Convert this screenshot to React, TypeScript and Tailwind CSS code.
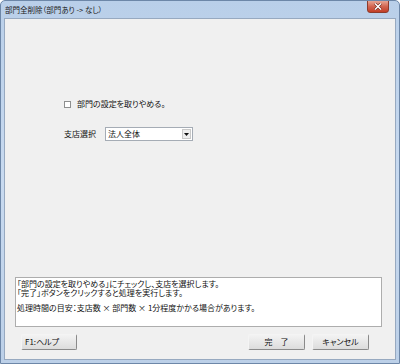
const font = "font-['Noto_Sans_CJK_JP','Noto_Sans',sans-serif] [font-feature-settings:'palt']";

function Button({ label, className }: { label: string; className?: string }) {
  return (
    <button
      className={`h-[16px] rounded-[2px] border border-t-[#f4f4f4] border-l-[#f4f4f4] border-r-[#8a8a8a] border-b-[#8a8a8a] bg-gradient-to-b from-[#f3f3f3] to-[#dcdcdc] text-[8px] leading-[14px] text-[#111] ${className ?? ''}`}
    >
      {label}
    </button>
  );
}

export default function App() {
  return (
    <div
      className={`${font} relative flex h-[364px] w-[400px] flex-col overflow-hidden rounded-t-[5px] border border-[#6d87a8] bg-gradient-to-b from-[#b9cfe9] via-[#c8daf0] to-[#bcd0e8] text-[#111]`}
    >
      {/* title bar */}
      <div className="flex h-[17px] shrink-0 items-center pl-[4px] pt-[1px]">
        <span className="text-[7.5px] leading-none text-[#1a1a1a]">部門全削除（部門あり -&gt; なし）</span>
      </div>
      <div className="absolute right-[10px] top-[-1px] flex h-[13px] w-[22px] items-center justify-center rounded-b-[3px] border border-[#8d3b2c] bg-gradient-to-b from-[#e6a594] via-[#d26550] to-[#c23d25]">
        <svg width="8" height="7" viewBox="0 0 8 7">
          <path d="M1 0.5 L7 6.5 M7 0.5 L1 6.5" stroke="#6a2418" strokeWidth="2.6" />
          <path d="M1 0.5 L7 6.5 M7 0.5 L1 6.5" stroke="#ffffff" strokeWidth="1.5" />
        </svg>
      </div>

      {/* client area */}
      <div className="mx-[3px] mb-[3px] flex flex-1 flex-col border border-[#97a9c0] bg-[#f0f0f0]">
        <div className="flex flex-col pl-[59px] pt-[79px]">
          <label className="flex h-[12px] items-center">
            <span className="h-[7px] w-[7px] border border-[#8e8f8f] bg-white" />
            <span className="ml-[6px] text-[8px] leading-none">部門の設定を取りやめる。</span>
          </label>
          <div className="mt-[17px] flex h-[14px] items-center">
            <span className="w-[41px] text-[8px] leading-none">支店選択</span>
            <div className="flex h-[14px] w-[88px] items-center border border-[#a5acb5] bg-white pl-[2px] pr-[1px]">
              <span className="flex-1 text-[8px] leading-none">法人全体</span>
              <span className="flex h-[10px] w-[9px] items-center justify-center border border-[#c9c9c9] bg-[#eeeeee]">
                <svg width="5" height="3" viewBox="0 0 5 3">
                  <path d="M0 0 H5 L2.5 3 Z" fill="#111" />
                </svg>
              </span>
            </div>
          </div>
        </div>

        <div className="ml-[10px] mr-[13px] mt-auto h-[50px] border border-[#adadad] bg-white px-[1px] pt-[1px] text-[8px] leading-[9px] text-[#111]">
          <p>「部門の設定を取りやめる」にチェックし、支店を選択します。</p>
          <p>「完了」ボタンをクリックすると処理を実行します。</p>
          <p className="mt-[6px]">処理時間の目安：支店数 × 部門数 × 1分程度かかる場合があります。</p>
        </div>

        <div className="mb-[9px] ml-[16px] mr-[26px] mt-[7px] flex items-center">
          <Button label="F1:ヘルプ" className="w-[56px] pl-[3px] text-left" />
          <Button label="完　了" className="ml-auto w-[57px]" />
          <Button label="キャンセル" className="ml-[7px] w-[57px]" />
        </div>
      </div>
    </div>
  );
}
